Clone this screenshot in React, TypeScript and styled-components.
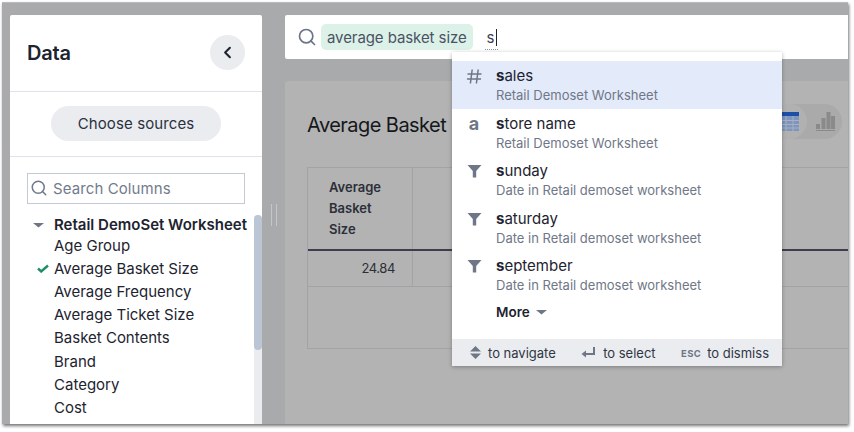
import React from 'react';
import styled, { createGlobalStyle } from 'styled-components';
import { Search, ChevronLeft } from 'lucide-react';

const Global = createGlobalStyle`
  html, body {
    margin: 0;
    padding: 0;
    width: 854px;
    height: 432px;
    overflow: hidden;
    background: #fff;
    font-family: Inter, "Noto Sans", sans-serif;
    color: #1d232f;
  }
`;

const Frame = styled.div`
  width: 846px;
  height: 422px;
  margin: 2px 0 0 2px;
  box-sizing: border-box;
  padding: 12px 0 0 8px;
  display: flex;
  background: #a9aaac;
  box-shadow: 1px 2px 3px rgba(0, 0, 0, 0.55);
  border-top: 1px solid #b9babb;
  overflow: hidden;
`;

const Sidebar = styled.aside`
  width: 252px;
  flex: none;
  background: #fff;
  border-radius: 2px 2px 0 0;
  display: flex;
  flex-direction: column;
`;

const SidebarHead = styled.div`
  height: 77px;
  flex: none;
  box-sizing: border-box;
  padding: 0 17px 1px;
  display: flex;
  align-items: center;
  justify-content: space-between;
  border-bottom: 1px solid #dfe2ea;
`;

const Title = styled.h1`
  margin: 0;
  font-size: 20px;
  font-weight: 600;
  letter-spacing: -0.2px;
`;

const Round = styled.button`
  width: 35px;
  height: 35px;
  border: 0;
  padding: 0;
  border-radius: 50%;
  background: #eaecf0;
  color: #1d232f;
  display: flex;
  align-items: center;
  justify-content: center;
`;

const Sources = styled.div`
  height: 65px;
  flex: none;
  box-sizing: border-box;
  padding-bottom: 2px;
  display: flex;
  align-items: center;
  justify-content: center;
  border-bottom: 1px solid #dfe2ea;
`;

const Pill = styled.button`
  width: 170px;
  height: 35px;
  border: 0;
  border-radius: 18px;
  background: #eaecf0;
  color: #2a3140;
  font: 400 15px Inter, sans-serif;
  letter-spacing: 0.1px;
`;

const ColumnsArea = styled.div`
  flex: 1;
  min-height: 0;
  display: flex;
`;

const Columns = styled.div`
  width: 244px;
  flex: none;
  box-sizing: border-box;
  padding: 16px 0 0 17px;
  overflow: hidden;
`;

const ColumnSearch = styled.div`
  width: 218px;
  height: 31px;
  box-sizing: border-box;
  border: 1px solid #c3cad6;
  display: flex;
  align-items: center;
  gap: 5px;
  padding: 0 0 1px 2px;
  margin-bottom: 12px;
  color: #727b8c;
  font-size: 15px;
  letter-spacing: 0.1px;
`;

const Scroll = styled.div`
  width: 8px;
  flex: none;
  margin-top: 58px;
  background: #eaecf0;
  border-radius: 4px 4px 0 0;
`;

const Thumb = styled.div`
  height: 135px;
  border-radius: 4px;
  background: #bcc5d3;
`;

const TreeRow = styled.div<{ $bold?: boolean }>`
  height: ${p => (p.$bold ? 17.5 : 23.2)}px;
  display: flex;
  align-items: center;
  font-size: 15px;
  font-weight: ${p => (p.$bold ? 600 : 400)};
  white-space: nowrap;
  color: #1d232f;
`;

const TreeMark = styled.span<{ $caret?: boolean }>`
  width: 27px;
  flex: none;
  display: flex;
  justify-content: flex-end;
  padding-right: ${p => (p.$caret ? 10 : 5)}px;
  box-sizing: border-box;
`;

const Gutter = styled.div`
  width: 23px;
  flex: none;
  display: flex;
  align-items: center;
  justify-content: center;
  gap: 4px;
  padding-bottom: 9px;
  box-sizing: border-box;
`;

const GutterLine = styled.i`
  width: 1px;
  height: 22px;
  background: #c5c6c8;
`;

const Main = styled.main`
  flex: 1;
  min-width: 0;
  display: flex;
  flex-direction: column;
  gap: 22px;
  position: relative;
`;

const SearchBar = styled.div`
  height: 44px;
  flex: none;
  background: #fff;
  display: flex;
  align-items: center;
  padding-left: 12px;
  border-radius: 2px 0 0 2px;
`;

const Token = styled.span`
  height: 26px;
  padding: 0 6px;
  margin-left: 4px;
  border-radius: 5px;
  background: #dcf1e8;
  color: #4a5364;
  font-size: 15px;
  letter-spacing: -0.08px;
  display: flex;
  align-items: center;
`;

const Typed = styled.span`
  margin-left: 14px;
  font-size: 15px;
  color: #3a4150;
  border-right: 1px solid #1d232f;
  padding-right: 1px;
  line-height: 17px;
  position: relative;
  &::after {
    content: '';
    position: absolute;
    left: -2px;
    right: -2px;
    bottom: -4px;
    border-bottom: 1px dotted #8a93a3;
  }
`;

const Card = styled.section`
  flex: 1;
  background: #b3b3b3;
  border-radius: 3px 0 0 0;
  padding: 0 0 0 22px;
  min-height: 0;
`;

const CardHead = styled.div`
  height: 86px;
  box-sizing: border-box;
  padding-top: 2px;
  display: flex;
  align-items: center;
  justify-content: space-between;
`;

const CardTitle = styled.h2`
  margin: 0;
  font-size: 20px;
  font-weight: 400;
  letter-spacing: -0.55px;
  color: #15171b;
`;

const Toggle = styled.div`
  width: 70px;
  height: 35px;
  margin: 0 6px 7px 0;
  border-radius: 18px;
  background: #aaaaaa;
  display: flex;
  align-items: center;
  gap: 9px;
`;

const ToggleActive = styled.div`
  width: 35px;
  height: 35px;
  flex: none;
  border-radius: 50%;
  background: #b1b1b1;
  display: flex;
  align-items: center;
  justify-content: center;
`;

const Grid = styled.div`
  height: 182px;
  border: 1px solid #a3a3a5;
  border-right: 0;
  box-sizing: border-box;
`;

const GridHead = styled.div`
  height: 83px;
  display: flex;
  border-bottom: 2px solid #3b3f4c;
  box-sizing: border-box;
`;

const HeadCell = styled.div`
  width: 105px;
  flex: none;
  box-sizing: border-box;
  border-right: 1px solid #a3a3a5;
  padding: 9px 0 0 21px;
  font-size: 13px;
  line-height: 21px;
  font-weight: 600;
  color: #2c2f38;
`;

const GridRow = styled.div`
  height: 36px;
  display: flex;
  border-bottom: 1px solid #a3a3a5;
  box-sizing: border-box;
`;

const ValueCell = styled.div`
  width: 105px;
  flex: none;
  box-sizing: border-box;
  border-right: 1px solid #a3a3a5;
  padding-right: 17px;
  text-align: right;
  font-size: 13px;
  letter-spacing: -0.4px;
  line-height: 34px;
  color: #2c2f38;
`;

const Menu = styled.div`
  position: absolute;
  left: 167px;
  top: 37px;
  width: 330px;
  height: 314px;
  background: #fff;
  box-shadow: 0 1px 4px rgba(0, 0, 0, 0.3);
  padding-top: 9px;
  box-sizing: border-box;
  display: flex;
  flex-direction: column;
`;

const Item = styled.div<{ $active?: boolean }>`
  height: 47.5px;
  flex: none;
  box-sizing: border-box;
  background: ${p => (p.$active ? '#e3eafa' : 'transparent')};
  display: flex;
  padding-top: 5px;
`;

const ItemIcon = styled.div`
  width: 44px;
  height: 20px;
  flex: none;
  display: flex;
  align-items: center;
  justify-content: center;
  color: #6f7787;
  font-size: 18px;
  font-weight: 700;
`;

const ItemName = styled.div`
  font-size: 15px;
  line-height: 19px;
  color: #1d232f;
  b {
    font-weight: 700;
  }
`;

const ItemSub = styled.div`
  margin-top: 1px;
  font-size: 13px;
  line-height: 19px;
  color: #6f7787;
`;

const More = styled.div`
  margin: 5px 0 0 44px;
  display: flex;
  align-items: center;
  gap: 6px;
  font-size: 13.5px;
  font-weight: 600;
  color: #1d232f;
`;

const Hints = styled.div`
  margin-top: auto;
  height: 27px;
  flex: none;
  background: #eaecf0;
  display: flex;
  align-items: center;
  justify-content: space-between;
  padding: 0 13px 0 17px;
  font-size: 13px;
  color: #2f3644;
`;

const Hint = styled.span`
  display: flex;
  align-items: center;
  gap: 6px;
`;

const Esc = styled.span`
  font-size: 9.5px;
  font-weight: 700;
  letter-spacing: 0.4px;
  color: #6f7787;
  margin-top: 2px;
`;

const columns = [
  'Age Group',
  'Average Basket Size',
  'Average Frequency',
  'Average Ticket Size',
  'Basket Contents',
  'Brand',
  'Category',
  'Cost',
];

const FilterIcon = () => (
  <svg width="15" height="14" viewBox="0 0 15 14">
    <path d="M0.5 1h14L9.2 7V13.500H5.800V7z" fill="#6f7787" />
  </svg>
);

const HashIcon = () => (
  <svg width="15" height="15" viewBox="0 0 15 15">
    <path
      d="M5.200 0.500L3.400 14.500M11.200 0.500L9.400 14.500M0.500 5h14M0 10h14"
      fill="none"
      stroke="#6f7787"
      strokeWidth="1.500"
    />
  </svg>
);

const Caret = ({ size = 11 }: { size?: number }) => (
  <svg width={size} height="6" viewBox="0 0 11 6">
    <path d="M0 1h11L5.500 5.500z" fill="#6f7787" />
  </svg>
);

const suggestions = [
  { icon: <HashIcon />, bold: 's', rest: 'ales', sub: 'Retail Demoset Worksheet' },
  { icon: 'a', bold: 's', rest: 'tore name', sub: 'Retail Demoset Worksheet' },
  { icon: <FilterIcon />, bold: 's', rest: 'unday', sub: 'Date in Retail demoset worksheet' },
  { icon: <FilterIcon />, bold: 's', rest: 'aturday', sub: 'Date in Retail demoset worksheet' },
  { icon: <FilterIcon />, bold: 's', rest: 'eptember', sub: 'Date in Retail demoset worksheet' },
];

const App: React.FC = () => (
  <>
    <Global />
    <Frame>
      <Sidebar>
        <SidebarHead>
          <Title>Data</Title>
          <Round>
            <ChevronLeft size={19} strokeWidth={2.6} />
          </Round>
        </SidebarHead>
        <Sources>
          <Pill>Choose sources</Pill>
        </Sources>
        <ColumnsArea>
          <Columns>
            <ColumnSearch>
              <Search size={18} color="#6f7a8c" strokeWidth={2} />
              Search Columns
            </ColumnSearch>
            <TreeRow $bold>
              <TreeMark $caret>
                <Caret />
              </TreeMark>
              Retail DemoSet Worksheet
            </TreeRow>
            {columns.map(c => (
              <TreeRow key={c}>
                <TreeMark>
                  {c === 'Average Basket Size' && (
                    <svg width="12" height="9" viewBox="0 0 12 9">
                      <path d="M1 4.500l3.200 3L11 1.500" fill="none" stroke="#1f8f68" strokeWidth="2.400" />
                    </svg>
                  )}
                </TreeMark>
                {c}
              </TreeRow>
            ))}
          </Columns>
          <Scroll>
            <Thumb />
          </Scroll>
        </ColumnsArea>
      </Sidebar>
      <Gutter>
        <GutterLine />
        <GutterLine />
      </Gutter>
      <Main>
        <SearchBar>
          <Search size={20} color="#6b7486" strokeWidth={2} />
          <Token>average basket size</Token>
          <Typed>s</Typed>
        </SearchBar>
        <Card>
          <CardHead>
            <CardTitle>Average Basket Size</CardTitle>
            <Toggle>
              <ToggleActive>
                <svg width="19" height="19" viewBox="0 0 19 19">
                  <rect width="19" height="19" fill="#7f95bb" />
                  <rect width="19" height="4" fill="#1d4fa8" />
                  <path d="M0 8.500h19M0 12.500h19M0 16h19M6 4v15M13 4v15" stroke="#a5b1c6" strokeWidth="1" />
                </svg>
              </ToggleActive>
              <svg width="19" height="19" viewBox="0 0 19 19">
                <path d="M0 12h4v5H0zM5.500 6h4v11h-4zM10.500 0h4v17h-4zM15 4h4v13h-4zM0 18h19v1.500H0z" fill="#8a8a8b" />
              </svg>
            </Toggle>
          </CardHead>
          <Grid>
            <GridHead>
              <HeadCell>
                Average
                <br />
                Basket
                <br />
                Size
              </HeadCell>
            </GridHead>
            <GridRow>
              <ValueCell>24.84</ValueCell>
            </GridRow>
          </Grid>
        </Card>
        <Menu>
          {suggestions.map((s, i) => (
            <Item key={s.rest} $active={i === 0}>
              <ItemIcon>{s.icon}</ItemIcon>
              <div>
                <ItemName>
                  <b>{s.bold}</b>
                  {s.rest}
                </ItemName>
                <ItemSub>{s.sub}</ItemSub>
              </div>
            </Item>
          ))}
          <More>
            More
            <Caret />
          </More>
          <Hints>
            <Hint>
              <svg width="13" height="13" viewBox="0 0 13 13">
                <path d="M6.500 0L12 5.500H1zM1 7.500h11L6.500 13z" fill="#6f7787" />
              </svg>
              to navigate
            </Hint>
            <Hint>
              <svg width="14" height="13" viewBox="0 0 14 13">
                <path d="M13 1v7H3" fill="none" stroke="#6f7787" strokeWidth="2" />
                <path d="M0.500 8L5 4.500v7z" fill="#6f7787" />
              </svg>
              <span style={{ marginLeft: 2 }}>to select</span>
            </Hint>
            <Hint>
              <Esc>ESC</Esc>
              to dismiss
            </Hint>
          </Hints>
        </Menu>
      </Main>
    </Frame>
  </>
);

export default App;
